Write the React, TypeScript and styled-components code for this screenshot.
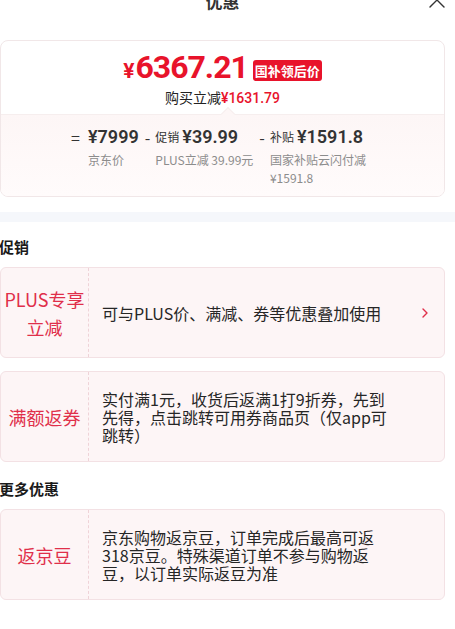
import React from "react";
import styled, { createGlobalStyle } from "styled-components";

const GlobalStyle = createGlobalStyle`
  html, body {
    margin: 0;
    padding: 0;
    background: #ffffff;
  }
  body {
    font-family: "Noto Sans CJK SC", "Noto Sans", sans-serif;
    color: #1a1a1a;
  }
  * {
    box-sizing: border-box;
  }
`;

const RED = "#e8132b";
const TAG_RED = "#e02f4a";

const Page = styled.div`
  width: 455px;
  padding-right: 10px;
  overflow: hidden;
`;

const Header = styled.div`
  display: grid;
  grid-template-columns: 1fr auto 1fr;
  align-items: center;
  height: 40px;
  margin-top: -20px;
  margin-bottom: 20px;
`;

const Title = styled.div`
  grid-column: 2;
  font-size: 17px;
  font-weight: 700;
  color: #333;
`;

const Close = styled.div`
  grid-column: 3;
  justify-self: end;
  display: flex;
`;

const PriceCard = styled.div`
  border: 1px solid #f1e7e8;
  border-radius: 8px;
  overflow: hidden;
`;

const PriceTop = styled.div`
  display: flex;
  flex-direction: column;
  align-items: center;
  padding: 10px 0 6px;
`;

const PriceRow = styled.div`
  display: flex;
  align-items: center;
  height: 36px;
`;

const Price = styled.span`
  font-family: Roboto, "Liberation Sans", sans-serif;
  font-weight: 700;
  color: ${RED};
  font-size: 32px;
  letter-spacing: -1px;
  line-height: 36px;
`;

const Yen = styled.span`
  font-size: 21px;
  margin-right: 2px;
`;

const Badge = styled.span`
  margin-left: 5px;
  margin-top: 3px;
  background: ${RED};
  color: #fff;
  font-size: 13px;
  font-weight: 700;
  line-height: 21px;
  padding: 0 2px;
  border-radius: 3px;
`;

const SaveLine = styled.div`
  font-size: 14px;
  line-height: 20px;
  color: #222;
`;

const SaveAmount = styled.span`
  color: ${RED};
  font-family: Roboto, "Noto Sans CJK SC", sans-serif;
  font-weight: 500;
`;

const Breakdown = styled.div`
  position: relative;
  display: flex;
  justify-content: center;
  gap: 6px;
  padding: 11px 0 9px;
  background: linear-gradient(180deg, #fdf6f6 0%, #fffbfb 100%);
  border-top: 1px solid #f6eeee;

  &::before {
    content: "";
    position: absolute;
    top: -6px;
    left: 222px;
    width: 9px;
    height: 9px;
    background: #fdf6f6;
    border-left: 1px solid #f6eeee;
    border-top: 1px solid #f6eeee;
    transform: rotate(45deg);
  }
`;

const Term = styled.div`
  display: flex;
  align-items: flex-start;
`;

const Op = styled.span<{ $gap: number }>`
  font-size: 16px;
  line-height: 22px;
  color: #333;
  margin-right: ${(p) => p.$gap}px;
`;

const TermBody = styled.div`
  display: flex;
  flex-direction: column;
  max-width: 104px;
  gap: 3px;
`;

const Main = styled.div`
  display: flex;
  align-items: center;
  gap: 3px;
  line-height: 22px;
  white-space: nowrap;
`;

const MainLabel = styled.span`
  font-size: 12px;
  color: #333;
`;

const Amount = styled.span`
  font-family: Roboto, "Liberation Sans", sans-serif;
  font-size: 18px;
  font-weight: 600;
  color: #333;
`;

const Sub = styled.div`
  font-size: 12px;
  line-height: 18px;
  color: #8c8c8c;
`;

const Band = styled.div`
  height: 10px;
  margin: 15px -10px 0 0;
  background: #f5f7fb;
`;

const Heading = styled.div<{ $top: number }>`
  font-size: 15px;
  font-weight: 700;
  line-height: 21px;
  color: #1a1a1a;
  margin: ${(p) => p.$top}px 0 10px -1px;
`;

const PromoList = styled.div`
  display: flex;
  flex-direction: column;
  gap: 13px;
`;

const PromoCard = styled.div`
  display: flex;
  align-items: stretch;
  min-height: 91px;
  background: #fdf5f6;
  border: 1px solid #f3e1e4;
  border-radius: 6px;
`;

const PromoTag = styled.div`
  flex: 0 0 88px;
  display: flex;
  align-items: center;
  justify-content: center;
  text-align: center;
  border-right: 1px dashed #efd3d8;
  color: ${TAG_RED};
  font-size: 18px;
  line-height: 28px;
  padding: 0 2px;
`;

const PromoBody = styled.div`
  flex: 1;
  display: flex;
  align-items: center;
  padding: 0 16px 0 13px;
`;

const PromoText = styled.div`
  max-width: 292px;
  font-size: 16px;
  line-height: 18px;
  color: #262626;
`;

const Chevron = styled.div`
  margin-left: auto;
  display: flex;
`;

type Promo = { tag: React.ReactNode; text: string; link?: boolean };

const promos: Promo[] = [
  {
    tag: (
      <>
        PLUS专享
        <br />
        立减
      </>
    ),
    text: "可与PLUS价、满减、券等优惠叠加使用",
    link: true,
  },
  {
    tag: "满额返券",
    text: "实付满1元，收货后返满1打9折券，先到先得，点击跳转可用券商品页（仅app可跳转）",
  },
];

const more: Promo[] = [
  {
    tag: "返京豆",
    text: "京东购物返京豆，订单完成后最高可返318京豆。特殊渠道订单不参与购物返豆，以订单实际返豆为准",
  },
];

const PromoItem = ({ promo }: { promo: Promo }) => (
  <PromoCard>
    <PromoTag>{promo.tag}</PromoTag>
    <PromoBody>
      <PromoText>{promo.text}</PromoText>
      {promo.link && (
        <Chevron>
          <svg width="6" height="10" viewBox="0 0 6 10" fill="none">
            <path d="M1 1l4 4-4 4" stroke={TAG_RED} strokeWidth="1.4" strokeLinecap="round" strokeLinejoin="round" />
          </svg>
        </Chevron>
      )}
    </PromoBody>
  </PromoCard>
);

const App: React.FC = () => {
  return (
    <Page>
      <GlobalStyle />
      <Header>
        <Title>优惠</Title>
        <Close>
          <svg width="16" height="16" viewBox="0 0 16 16" fill="none">
            <path d="M1 1l14 14M15 1L1 15" stroke="#333" strokeWidth="1.4" strokeLinecap="round" />
          </svg>
        </Close>
      </Header>

      <PriceCard>
        <PriceTop>
          <PriceRow>
            <Price>
              <Yen>¥</Yen>6367.21
            </Price>
            <Badge>国补领后价</Badge>
          </PriceRow>
          <SaveLine>
            购买立减<SaveAmount>¥1631.79</SaveAmount>
          </SaveLine>
        </PriceTop>
        <Breakdown>
          <Term>
            <Op $gap={8}>=</Op>
            <TermBody>
              <Main>
                <Amount>¥7999</Amount>
              </Main>
              <Sub>京东价</Sub>
            </TermBody>
          </Term>
          <Term>
            <Op $gap={5}>-</Op>
            <TermBody>
              <Main>
                <MainLabel>促销</MainLabel>
                <Amount>¥39.99</Amount>
              </Main>
              <Sub>PLUS立减 39.99元</Sub>
            </TermBody>
          </Term>
          <Term>
            <Op $gap={5}>-</Op>
            <TermBody>
              <Main>
                <MainLabel>补贴</MainLabel>
                <Amount>¥1591.8</Amount>
              </Main>
              <Sub>国家补贴云闪付减 ¥1591.8</Sub>
            </TermBody>
          </Term>
        </Breakdown>
      </PriceCard>

      <Band />

      <Heading $top={14}>促销</Heading>
      <PromoList>
        {promos.map((p, i) => (
          <PromoItem key={i} promo={p} />
        ))}
      </PromoList>

      <Heading $top={16}>更多优惠</Heading>
      <PromoList>
        {more.map((p, i) => (
          <PromoItem key={i} promo={p} />
        ))}
      </PromoList>
    </Page>
  );
};

export default App;
